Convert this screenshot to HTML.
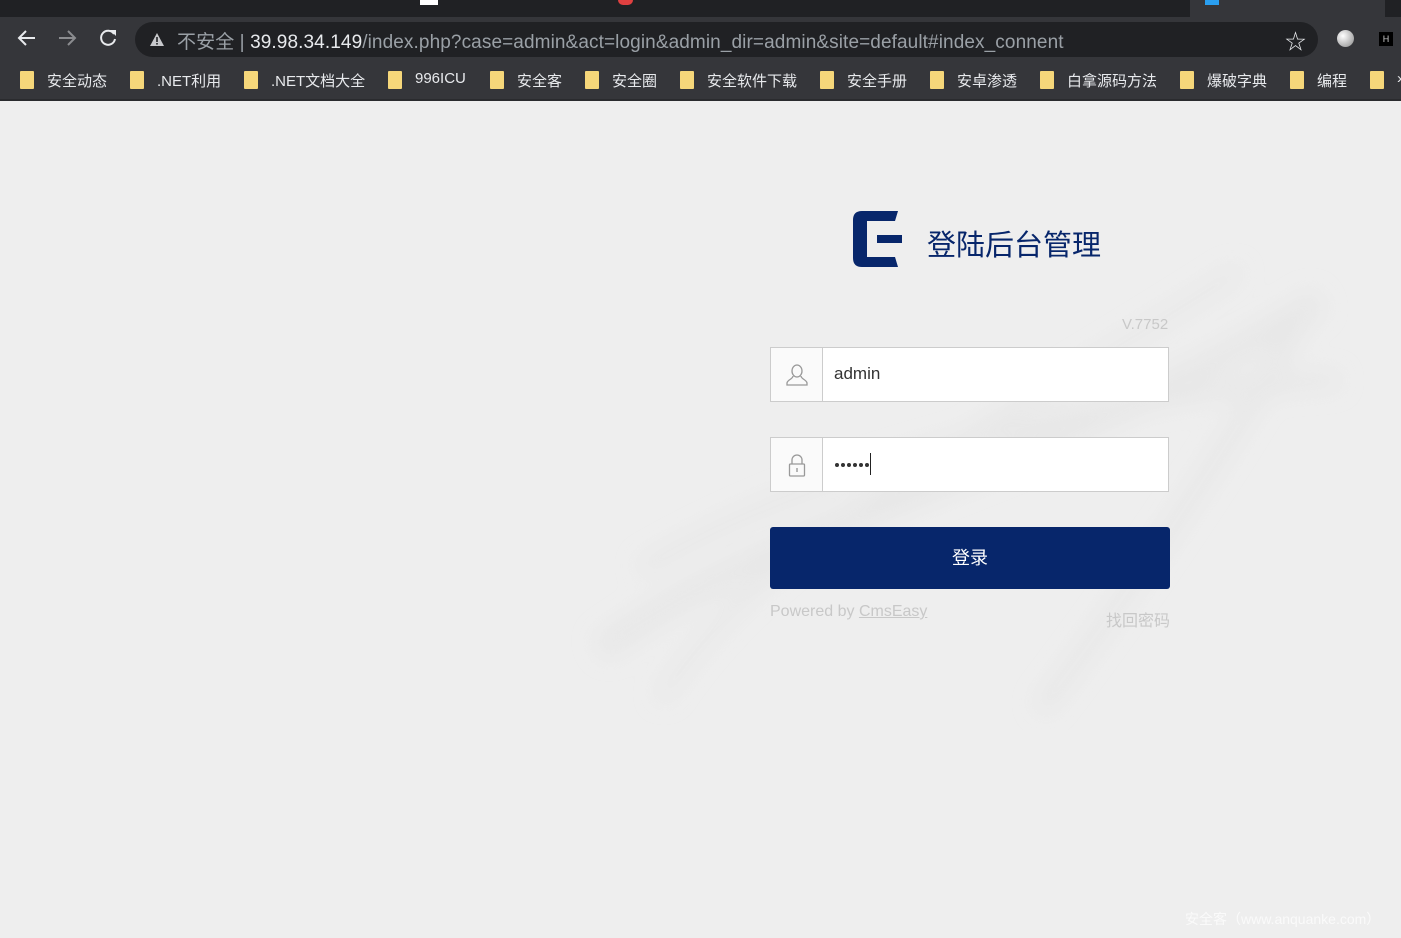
<!DOCTYPE html>
<html><head><meta charset="utf-8"><style>
*{margin:0;padding:0;box-sizing:border-box}
body{width:1401px;height:938px;overflow:hidden;background:#eeeeee;font-family:"Liberation Sans","Noto Sans CJK SC",sans-serif;position:relative}
.abs{position:absolute}
#tabs{left:0;top:0;width:1401px;height:17px;background:#202124}
#tool{left:0;top:17px;width:1401px;height:45px;background:#35363a}
#url{left:135px;top:22px;width:1183px;height:35px;background:#202124;border-radius:18px}
#bm{left:0;top:62px;width:1401px;height:39px;background:#35363a;border-bottom:2px solid #2a2b2e}
.f{position:absolute;top:71px;width:14px;height:18px;background:#f6d77a;border-radius:1px}
.bl{position:absolute;top:70px;color:#e8eaed;font-size:15px;white-space:nowrap}
.inp{position:absolute;left:770px;width:399px;height:55px;background:#fff;border:1px solid #ccc}
.ic{position:absolute;left:0;top:0;width:52px;height:53px;background:#fafafa;border-right:1px solid #ccc}
.d{position:absolute;top:25px;width:4px;height:4px;border-radius:50%;background:#333}
</style></head><body>
<div id="tabs" class="abs"></div>
<div class="abs" style="left:1190px;top:0;width:195px;height:17px;background:#35363a"></div>
<div class="abs" style="left:1205px;top:0;width:14px;height:5px;background:#2a9ff0"></div>
<div class="abs" style="left:420px;top:0;width:18px;height:5px;background:#fff"></div>
<div class="abs" style="left:618px;top:0;width:15px;height:5px;background:#e04040;border-radius:0 0 6px 6px"></div>
<div id="tool" class="abs"></div>
<svg class="abs" style="left:16px;top:28px" width="22" height="20" viewBox="0 0 22 20"><path d="M19 10H4M10 3L3 10l7 7" stroke="#e8eaed" stroke-width="2" fill="none"/></svg>
<svg class="abs" style="left:56px;top:28px" width="22" height="20" viewBox="0 0 22 20"><path d="M3 10h15M12 3l7 7-7 7" stroke="#8b8c8f" stroke-width="2" fill="none"/></svg>
<svg class="abs" style="left:97px;top:27px" width="22" height="22" viewBox="0 0 22 22"><path d="M17 7A7 7 0 1 0 18 12" stroke="#e8eaed" stroke-width="2" fill="none"/><path d="M13 3h6v6z" fill="#e8eaed"/></svg>
<div id="url" class="abs"></div>
<svg class="abs" style="left:149px;top:32px" width="16" height="15" viewBox="0 0 16 15"><path d="M8 1L15 14H1z" fill="#c8c9cc"/><rect x="7.2" y="5" width="1.6" height="5" fill="#202124"/><rect x="7.2" y="11" width="1.6" height="1.6" fill="#202124"/></svg>
<div class="abs" style="left:177px;top:27px;font-size:19px;letter-spacing:0.1px;color:#9aa0a6;white-space:nowrap">不安全 | <span style="color:#e8eaed">39.98.34.149</span>/index.php?case=admin&amp;act=login&amp;admin_dir=admin&amp;site=default#index_connent</div>
<div class="abs" style="left:1285px;top:26px;font-size:21px;color:#e8eaed">☆</div>
<div class="abs" style="left:1337px;top:30px;width:17px;height:17px;border-radius:50%;background:radial-gradient(circle at 35% 35%,#fff,#888)"></div>
<div class="abs" style="left:1379px;top:32px;width:14px;height:14px;background:#000;color:#ccc;font-size:9px;text-align:center;line-height:14px">H</div>
<div id="bm" class="abs"></div>
<div class="f" style="left:20px"></div><div class="bl" style="left:47px">安全动态</div>
<div class="f" style="left:130px"></div><div class="bl" style="left:157px">.NET利用</div>
<div class="f" style="left:244px"></div><div class="bl" style="left:271px">.NET文档大全</div>
<div class="f" style="left:388px"></div><div class="bl" style="left:415px">996ICU</div>
<div class="f" style="left:490px"></div><div class="bl" style="left:517px">安全客</div>
<div class="f" style="left:585px"></div><div class="bl" style="left:612px">安全圈</div>
<div class="f" style="left:680px"></div><div class="bl" style="left:707px">安全软件下载</div>
<div class="f" style="left:820px"></div><div class="bl" style="left:847px">安全手册</div>
<div class="f" style="left:930px"></div><div class="bl" style="left:957px">安卓渗透</div>
<div class="f" style="left:1040px"></div><div class="bl" style="left:1067px">白拿源码方法</div>
<div class="f" style="left:1180px"></div><div class="bl" style="left:1207px">爆破字典</div>
<div class="f" style="left:1290px"></div><div class="bl" style="left:1317px">编程</div>
<div class="f" style="left:1370px"></div><div class="bl" style="left:1397px">›</div>

<svg class="abs" style="left:540px;top:230px" width="861" height="500" viewBox="0 0 861 500">
<defs><filter id="b"><feGaussianBlur stdDeviation="12"/></filter></defs>
<g filter="url(#b)" fill="none" stroke="#e3e3e3" opacity="0.6">
<path d="M60 420C250 280 500 250 780 70" stroke-width="26"/>
<path d="M120 470C230 300 420 220 700 40" stroke-width="14"/>
<path d="M100 340C300 220 600 160 800 150" stroke-width="16"/>
<path d="M500 480C600 350 700 200 760 90" stroke-width="18"/>
</g></svg>

<svg class="abs" style="left:853px;top:211px" width="50" height="57" viewBox="0 0 50 57"><path d="M9 0H45L42 10H14V46H42L45 56H9Q0 56 0 47V9Q0 0 9 0Z" fill="#07266b"/><rect x="24" y="24" width="25" height="8" fill="#07266b"/></svg>
<div class="abs" style="left:927px;top:222px;font-size:29px;color:#07266b;white-space:nowrap">登陆后台管理</div>
<div class="abs" style="left:1122px;top:316px;font-size:15px;color:#c8c8c8">V.7752</div>

<div class="inp" style="top:347px"><div class="ic"><svg style="position:absolute;left:15px;top:15px" width="22" height="24" viewBox="0 0 22 24"><path d="M11 2a5 6 0 0 1 0 12a5 6 0 0 1 0-12zM7 13c0 3-6 4-6 7v2h20v-2c0-3-6-4-6-7" stroke="#999" stroke-width="1.3" fill="none"/></svg></div><div style="position:absolute;left:63px;top:16px;font-size:17px;color:#333">admin</div></div>
<div class="inp" style="top:437px"><div class="ic"><svg style="position:absolute;left:17px;top:16px" width="18" height="24" viewBox="0 0 18 24"><path d="M4 10V6a5 5 0 0 1 10 0v4" stroke="#999" stroke-width="1.3" fill="none"/><rect x="1.5" y="10" width="15" height="12" rx="1" stroke="#999" stroke-width="1.3" fill="none"/><rect x="8.3" y="14" width="1.4" height="4" fill="#999"/></svg></div>
<div class="d" style="left:64px"></div><div class="d" style="left:70px"></div><div class="d" style="left:76px"></div><div class="d" style="left:82px"></div><div class="d" style="left:88px"></div><div class="d" style="left:94px"></div>
<div style="position:absolute;left:99px;top:15px;width:1px;height:22px;background:#222"></div></div>

<div class="abs" style="left:770px;top:527px;width:400px;height:62px;background:#07266b;border-radius:3px;color:#fff;font-size:18px;text-align:center;line-height:62px">登录</div>
<div class="abs" style="left:770px;top:603px;font-size:16px;color:#c8c8c8;white-space:nowrap">Powered by <span style="text-decoration:underline">CmsEasy</span></div>
<div class="abs" style="left:1106px;top:607px;font-size:16px;color:#c8c8c8">找回密码</div>
<div class="abs" style="left:1185px;top:909px;font-size:14px;color:#fafafa;white-space:nowrap">安全客（www.anquanke.com）</div>
</body></html>
